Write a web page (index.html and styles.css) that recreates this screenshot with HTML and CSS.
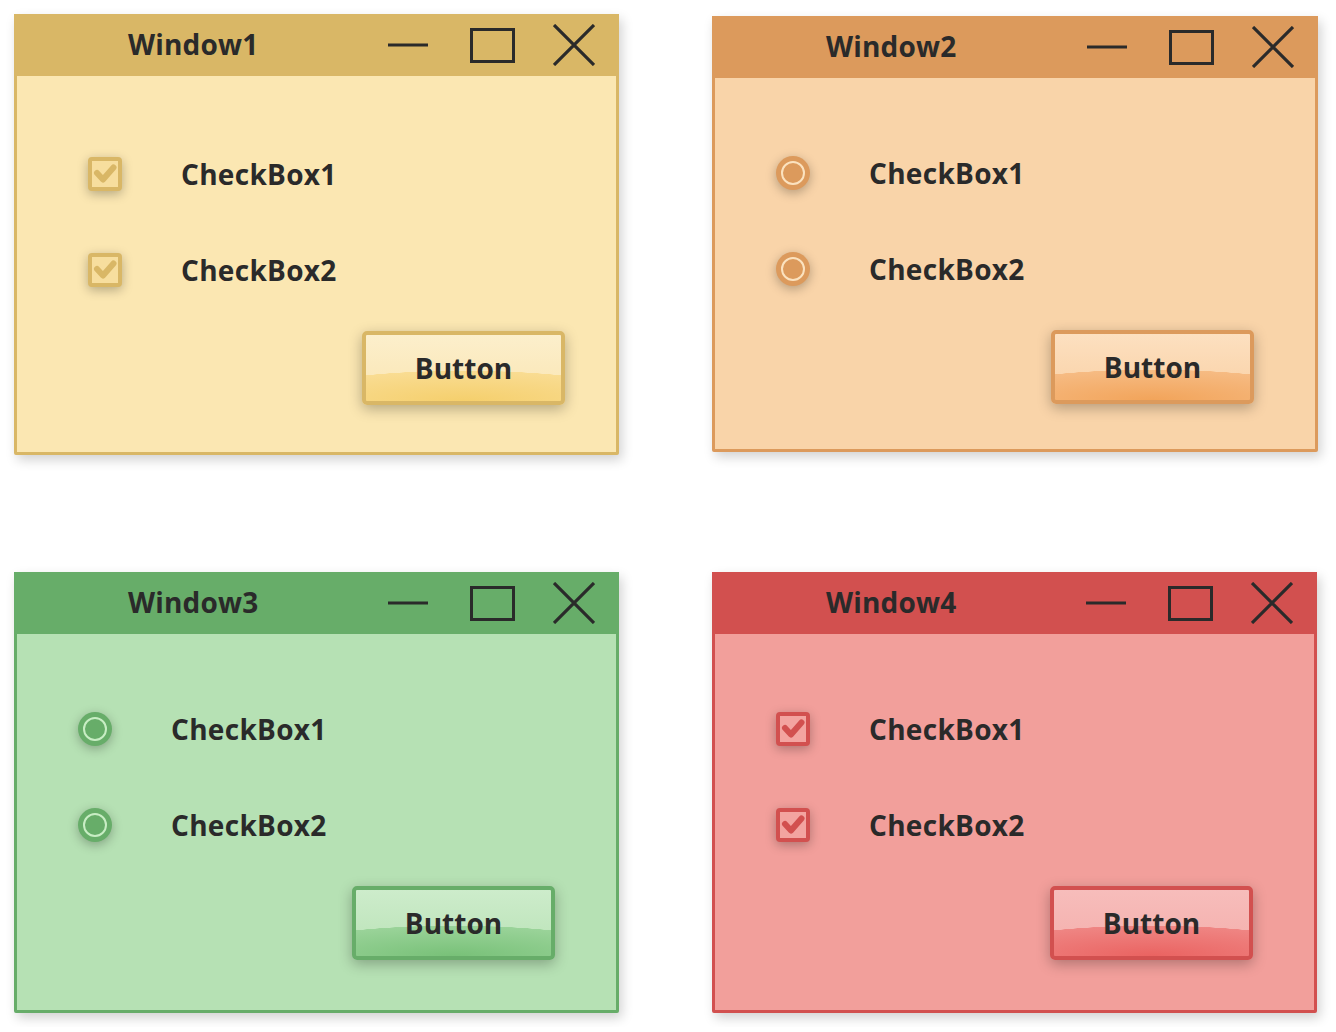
FILE: index.html
```html
<!DOCTYPE html>
<html lang="en">
<head>
    <meta charset="UTF-8">
    <meta name="viewport" content="width=device-width, initial-scale=1.0">
    <title>Windows</title>
    <link rel="stylesheet" href="styles.css">
</head>
<body>
    <div class="desk">
        <!-- Window1 : gold, checkboxes -->
        <div class="window theme-gold first">
            <div class="titlebar">
                <span class="title">Window1</span>
                <svg class="ctl ctl-min" width="40" height="6" viewBox="0 0 40 6"><line x1="0" y1="3" x2="40" y2="3"/></svg>
                <svg class="ctl ctl-max" width="45" height="35" viewBox="0 0 45 35"><rect x="1.5" y="1.5" width="42" height="32"/></svg>
                <svg class="ctl ctl-close" width="42" height="42" viewBox="0 0 42 42"><path d="M1 1 L41 41 M41 1 L1 41"/></svg>
            </div>
            <div class="content">
                <div class="option">
                    <span class="check"><svg viewBox="0 0 26 26"><path d="M5 12 L11 18.5 L21.5 6.5"/></svg></span>
                    <span class="label">CheckBox1</span>
                </div>
                <div class="option">
                    <span class="check"><svg viewBox="0 0 26 26"><path d="M5 12 L11 18.5 L21.5 6.5"/></svg></span>
                    <span class="label">CheckBox2</span>
                </div>
                <button type="button" class="btn">Button</button>
            </div>
        </div>

        <!-- Window2 : orange, radios -->
        <div class="window theme-orange second">
            <div class="titlebar">
                <span class="title">Window2</span>
                <svg class="ctl ctl-min" width="40" height="6" viewBox="0 0 40 6"><line x1="0" y1="3" x2="40" y2="3"/></svg>
                <svg class="ctl ctl-max" width="45" height="35" viewBox="0 0 45 35"><rect x="1.5" y="1.5" width="42" height="32"/></svg>
                <svg class="ctl ctl-close" width="42" height="42" viewBox="0 0 42 42"><path d="M1 1 L41 41 M41 1 L1 41"/></svg>
            </div>
            <div class="content">
                <div class="option">
                    <span class="radio"></span>
                    <span class="label">CheckBox1</span>
                </div>
                <div class="option">
                    <span class="radio"></span>
                    <span class="label">CheckBox2</span>
                </div>
                <button type="button" class="btn">Button</button>
            </div>
        </div>

        <!-- Window3 : green, radios -->
        <div class="window theme-green">
            <div class="titlebar">
                <span class="title">Window3</span>
                <svg class="ctl ctl-min" width="40" height="6" viewBox="0 0 40 6"><line x1="0" y1="3" x2="40" y2="3"/></svg>
                <svg class="ctl ctl-max" width="45" height="35" viewBox="0 0 45 35"><rect x="1.5" y="1.5" width="42" height="32"/></svg>
                <svg class="ctl ctl-close" width="42" height="42" viewBox="0 0 42 42"><path d="M1 1 L41 41 M41 1 L1 41"/></svg>
            </div>
            <div class="content">
                <div class="option">
                    <span class="radio"></span>
                    <span class="label">CheckBox1</span>
                </div>
                <div class="option">
                    <span class="radio"></span>
                    <span class="label">CheckBox2</span>
                </div>
                <button type="button" class="btn">Button</button>
            </div>
        </div>

        <!-- Window4 : red, checkboxes -->
        <div class="window theme-red">
            <div class="titlebar">
                <span class="title">Window4</span>
                <svg class="ctl ctl-min" width="40" height="6" viewBox="0 0 40 6"><line x1="0" y1="3" x2="40" y2="3"/></svg>
                <svg class="ctl ctl-max" width="45" height="35" viewBox="0 0 45 35"><rect x="1.5" y="1.5" width="42" height="32"/></svg>
                <svg class="ctl ctl-close" width="42" height="42" viewBox="0 0 42 42"><path d="M1 1 L41 41 M41 1 L1 41"/></svg>
            </div>
            <div class="content">
                <div class="option">
                    <span class="check"><svg viewBox="0 0 26 26"><path d="M5 12 L11 18.5 L21.5 6.5"/></svg></span>
                    <span class="label">CheckBox1</span>
                </div>
                <div class="option">
                    <span class="check"><svg viewBox="0 0 26 26"><path d="M5 12 L11 18.5 L21.5 6.5"/></svg></span>
                    <span class="label">CheckBox2</span>
                </div>
                <button type="button" class="btn">Button</button>
            </div>
        </div>
    </div>
</body>
</html>
```

FILE: styles.css
```css
body{
    margin: 0;
    background: #ffffff;
    font-family: "Open Sans", "Noto Sans", sans-serif;
    color: #2a2a2a;
}
.desk{
    display: grid;
    grid-template-columns: 605px 606px;
    column-gap: 93px;
    row-gap: 117px;
    padding: 14px;
    align-items: start;
}

/* colour themes */
.theme-gold{ --main: #d9b766; --body: #fbe7b2; --box: #f7de9e; --ring: #fbe6b8; --btn-top: #fcefcc; --btn-mid: #fae5b1; --btn-low: #f5cf6c; --btn-edge: #f9dc92; }
.theme-orange{ --main: #dc9a5c; --body: #f9d4a9; --box: #f6cc9c; --ring: #fbe2bf; --btn-top: #fde0c0; --btn-mid: #f9d0a4; --btn-low: #f2a45a; --btn-edge: #f6bb83; }
.theme-green{ --main: #67ad69; --body: #b6e1b4; --box: #a9d8a6; --ring: #c8edc4; --btn-top: #cdeccb; --btn-mid: #b9e2b6; --btn-low: #78c178; --btn-edge: #9ad399; }
.theme-red{ --main: #d2504f; --body: #f29f9b; --box: #f3a4a0; --ring: #f8c4c0; --btn-top: #f7bdbb; --btn-mid: #f4aeab; --btn-low: #ea6361; --btn-edge: #ef8583; }

.window{
    width: 605px;
    height: 441px;
    box-sizing: border-box;
    border: 3px solid var(--main);
    border-radius: 2px;
    background: var(--body);
    box-shadow: 3px 5px 12px rgba(0,0,0,0.18);
    display: flex;
    flex-direction: column;
}
.window.second{ margin-top: 2px; height: 436px; width: 606px; }

/* title bar */
.titlebar{
    height: 62px;
    box-sizing: border-box;
    margin: -3px -3px 0;
    padding: 0 24px 0 114px;
    background: var(--main);
    display: flex;
    align-items: center;
    flex-shrink: 0;
}
.title{
    flex: 1;
    font-size: 28px;
    font-weight: bold;
    letter-spacing: 0.2px;
    padding-bottom: 2px;
}
.ctl{ display: block; fill: none; stroke: #2a2a2a; stroke-width: 3; }
.ctl-min{ margin-right: 42px; }
.ctl-max{ margin-right: 38px; }
.ctl-close{ stroke-width: 3.2; }

/* content */
.content{
    flex: 1;
    display: flex;
    flex-direction: column;
    padding: 78px 61px 0 61px;
}
.first .content{ padding: 81px 51px 0 71px; }
.option{
    height: 34px;
    display: flex;
    align-items: center;
    gap: 59px;
    margin-bottom: 62px;
}
.option + .option{ margin-bottom: 44px; }
.label{
    font-size: 28px;
    font-weight: bold;
    letter-spacing: 0.3px;
}

/* checkbox */
.check{
    width: 34px;
    height: 34px;
    box-sizing: border-box;
    border: 4px solid var(--main);
    border-radius: 4px;
    background: var(--box);
    box-shadow: 0 3px 11px rgba(0,0,0,0.28);
    flex-shrink: 0;
}
.check svg{
    display: block;
    width: 26px;
    height: 26px;
    fill: none;
    stroke: var(--main);
    stroke-width: 6;
    stroke-linecap: round;
    stroke-linejoin: round;
}

/* radio */
.radio{
    width: 34px;
    height: 34px;
    border-radius: 50%;
    background: var(--main);
    box-shadow: 0 3px 11px rgba(0,0,0,0.28);
    display: flex;
    align-items: center;
    justify-content: center;
    flex-shrink: 0;
}
.radio::after{
    content: "";
    width: 20px;
    height: 20px;
    border: 2px solid var(--ring);
    border-radius: 50%;
}

/* button */
.btn{
    align-self: flex-end;
    width: 203px;
    height: 74px;
    border: 4px solid var(--main);
    border-radius: 5px;
    font-family: inherit;
    font-size: 28px;
    font-weight: bold;
    color: #2a2a2a;
    background:
        radial-gradient(ellipse 95% 46% at 50% 100%, var(--btn-low) 0%, var(--btn-edge) 99%, transparent 100%),
        linear-gradient(var(--btn-top), var(--btn-mid));
    box-shadow: 0 4px 14px rgba(0,0,0,0.28);
    padding: 0;
}
```
